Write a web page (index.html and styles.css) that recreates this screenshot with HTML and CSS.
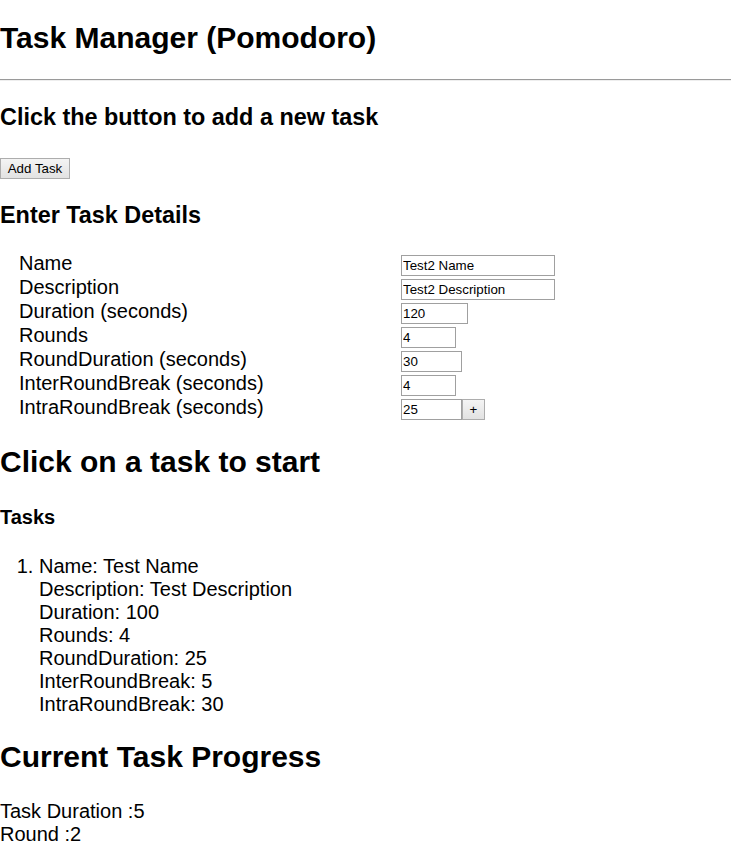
FILE: index.html
```html
<!DOCTYPE html>
<html>
<head>
<meta charset="utf-8">
<title>Task Manager (Pomodoro)</title>
<link rel="stylesheet" href="styles.css">
</head>
<body class="page">
<h2 class="title">Task Manager (Pomodoro)</h2>
<hr class="rule">
<h3 class="sub">Click the button to add a new task</h3>
<div class="add-wrap"><button class="btn add">Add Task</button></div>
<h3 class="sub">Enter Task Details</h3>
<div class="form">
  <div class="row"><span class="label">Name</span><input class="inp w-name" type="text" value="Test2 Name"></div>
  <div class="row"><span class="label">Description</span><input class="inp w-name" type="text" value="Test2 Description"></div>
  <div class="row"><span class="label">Duration (seconds)</span><input class="inp w-dur" type="text" value="120"></div>
  <div class="row"><span class="label">Rounds</span><input class="inp w-small" type="text" value="4"></div>
  <div class="row"><span class="label">RoundDuration (seconds)</span><input class="inp w-mid" type="text" value="30"></div>
  <div class="row"><span class="label">InterRoundBreak (seconds)</span><input class="inp w-small" type="text" value="4"></div>
  <div class="row"><span class="label">IntraRoundBreak (seconds)</span><input class="inp w-mid" type="text" value="25"><button class="btn plus">+</button></div>
</div>
<h2 class="title start">Click on a task to start</h2>
<h4 class="tasks">Tasks</h4>
<ol class="list">
  <li class="item">Name: Test Name<br>Description: Test Description<br>Duration: 100<br>Rounds: 4<br>RoundDuration: 25<br>InterRoundBreak: 5<br>IntraRoundBreak: 30</li>
</ol>
<h2 class="title current">Current Task Progress</h2>
<div class="progress">Task Duration :5<br>Round :2</div>
</body>
</html>
```
FILE: styles.css
```css
.page {
  margin: 0;
  font-family: "Liberation Sans", Arial, sans-serif;
  font-size: 20px;
  color: #000;
  background: #fff;
}
.title {
  font-size: 30px;
  font-weight: bold;
  margin: 21px 0 24px 0;
}
.title.start {
  margin: 25.9px 0 24.9px 0;
}
.title.current {
  margin: 23.9px 0 25.9px 0;
}
.rule {
  margin: 0 0 8px 0;
  border: 0;
  border-top: 1px solid #9a9a9a;
  border-bottom: 1px solid #eeeeee;
  height: 0;
}
.sub {
  font-size: 23.4px;
  font-weight: bold;
  margin: 23.4px 0;
}
.add-wrap {
  margin: 0;
}
.btn {
  font-family: "Liberation Sans", Arial, sans-serif;
  font-size: 13.33px;
  padding: 1px 6px;
  border: 1px solid #adadad;
  border-radius: 0;
  background: linear-gradient(#f4f4f4, #e2e2e2);
  color: #000;
  height: 21px;
  box-sizing: border-box;
}
.add {
  width: 70px;
}
.form {
  padding-left: 19px;
  margin-top: -1.7px;
}
.row {
  display: flex;
  align-items: flex-start;
  height: 24px;
}
.label {
  width: 382px;
  line-height: 24px;
}
.inp {
  font-family: "Liberation Sans", Arial, sans-serif;
  font-size: 13.33px;
  height: 21px;
  box-sizing: border-box;
  border: 1px solid #a0a0a0;
  padding: 1px 1px;
  margin: 4px 0 0 0;
  color: #000;
  background: #fff;
}
.w-name { width: 154px; }
.w-dur { width: 67px; }
.w-small { width: 55px; }
.w-mid { width: 61px; }
.plus {
  width: 23px;
  padding: 0;
  margin: 4px 0 0 0;
}
.tasks {
  font-size: 20px;
  font-weight: bold;
  margin: 27.6px 0 26px 0;
}
.list {
  margin: 20px 0 19px 0;
  padding-left: 39px;
}
.item {
  line-height: 23px;
}
.progress {
  line-height: 23px;
}
```
